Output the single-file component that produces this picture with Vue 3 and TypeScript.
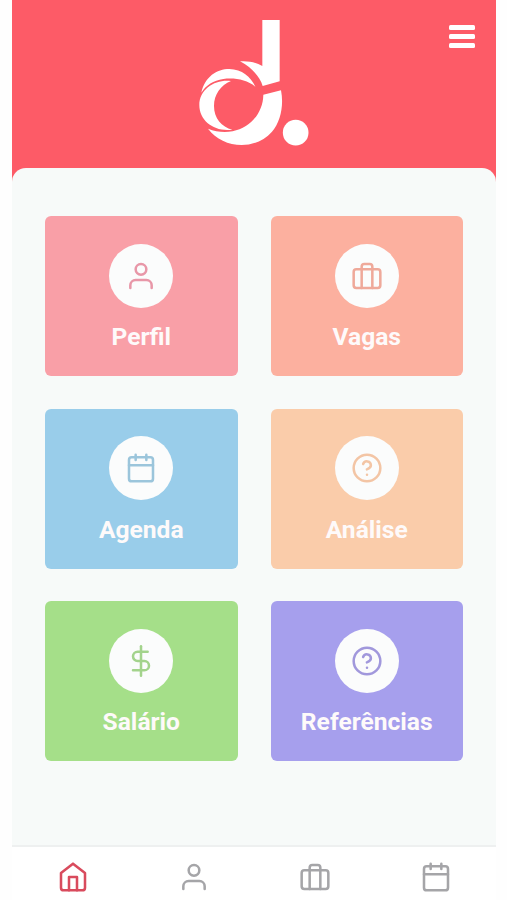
<script setup lang="ts">
type IconName = 'home' | 'user' | 'briefcase' | 'calendar' | 'help' | 'dollar'

interface Tile {
  label: string
  icon: IconName
  tone: string
}

const icons: Record<IconName, string[]> = {
  home: ['M3 9l9-7 9 7v11a2 2 0 0 1-2 2H5a2 2 0 0 1-2-2z', 'M9 22V12h6v10'],
  user: ['M20 21v-2a4 4 0 0 0-4-4H8a4 4 0 0 0-4 4v2', 'M16 7a4 4 0 1 1-8 0a4 4 0 0 1 8 0z'],
  briefcase: [
    'M4 7h16a2 2 0 0 1 2 2v10a2 2 0 0 1-2 2H4a2 2 0 0 1-2-2V9a2 2 0 0 1 2-2z',
    'M16 21V5a2 2 0 0 0-2-2h-4a2 2 0 0 0-2 2v16',
  ],
  calendar: [
    'M5 4h14a2 2 0 0 1 2 2v14a2 2 0 0 1-2 2H5a2 2 0 0 1-2-2V6a2 2 0 0 1 2-2z',
    'M16 2v4M8 2v4M3 10h18',
  ],
  help: [
    'M22 12a10 10 0 1 1-20 0a10 10 0 0 1 20 0z',
    'M9.09 9a3 3 0 0 1 5.83 1c0 2-3 3-3 3M12 17h.01',
  ],
  dollar: ['M12 1v22', 'M17 5H9.5a3.5 3.5 0 0 0 0 7h5a3.5 3.5 0 0 1 0 7H6'],
}

const tiles: Tile[] = [
  { label: 'Perfil', icon: 'user', tone: 'rose' },
  { label: 'Vagas', icon: 'briefcase', tone: 'coral' },
  { label: 'Agenda', icon: 'calendar', tone: 'sky' },
  { label: 'Análise', icon: 'help', tone: 'peach' },
  { label: 'Salário', icon: 'dollar', tone: 'green' },
  { label: 'Referências', icon: 'help', tone: 'violet' },
]

const tabs: IconName[] = ['home', 'user', 'briefcase', 'calendar']
const activeTab: IconName = 'home'
</script>

<template>
  <div class="screen">
    <header class="header">
      <svg class="logo" viewBox="0 0 450 465" fill="#fff">
        <path d="M247 45H299V229L248 243C240 216 216 188 180 169C205 167 228 172 247 183Z" />
        <path d="M64 263C75 215 110 192 148 192C186 193 212 215 226 245C200 224 165 218 130 222C100 227 78 240 64 263Z" />
        <path d="M153 228C108 222 58 250 58 301C58 348 104 382 157 374C125 366 102 340 102 303C102 269 122 240 153 228Z" />
        <path d="M84 371C108 381 133 383 158 379C210 368 249 325 250 269L303 256C312 300 302 350 276 380C251 409 215 420 185 420C145 420 108 402 84 371Z" />
        <circle cx="347" cy="383" r="38.5" />
      </svg>
      <button class="menu" type="button">
        <span class="bar"></span>
        <span class="bar"></span>
        <span class="bar"></span>
      </button>
    </header>

    <main class="content">
      <a v-for="tile in tiles" :key="tile.label" class="tile" :class="tile.tone">
        <span class="disc">
          <svg class="icon" viewBox="0 0 24 24">
            <path v-for="d in icons[tile.icon]" :key="d" :d="d" />
          </svg>
        </span>
        <span class="label">{{ tile.label }}</span>
      </a>
    </main>

    <nav class="tabs">
      <a v-for="tab in tabs" :key="tab" class="tab" :class="{ active: tab === activeTab }">
        <svg class="icon" viewBox="0 0 24 24">
          <path v-for="d in icons[tab]" :key="d" :d="d" />
        </svg>
      </a>
    </nav>
  </div>
</template>

<style>
body {
  background: #fefefe;
}
</style>

<style scoped>
.screen {
  display: flex;
  flex-direction: column;
  box-sizing: border-box;
  width: 484px;
  height: 900px;
  margin-left: 12px;
  overflow: hidden;
  background: #fd5b67;
  font-family: Roboto, sans-serif;
}

.header {
  display: grid;
  grid-template-columns: 1fr 150px 1fr;
  align-items: start;
  box-sizing: border-box;
  height: 168px;
  flex: none;
  padding-top: 5px;
}

.logo {
  grid-column: 2;
  width: 150px;
  height: 155px;
  margin-left: 1px;
}

.menu {
  display: flex;
  flex-direction: column;
  justify-self: end;
  gap: 4px;
  margin: 19.5px 21px 0 0;
  padding: 0;
  border: 0;
  background: none;
}

.bar {
  width: 26px;
  height: 5px;
  border-radius: 1.5px;
  background: #fff;
}

.content {
  display: grid;
  grid-template-columns: 192.5px 192.5px;
  grid-auto-rows: 160px;
  align-content: start;
  gap: 32.5px 33px;
  flex: 1;
  padding: 48.4px 33px 0;
  border-radius: 14px 14px 0 0;
  background: #f7faf9;
}

.tile {
  display: flex;
  flex-direction: column;
  align-items: center;
  box-sizing: border-box;
  padding-top: 27.3px;
  border-radius: 6px;
  background: currentColor;
}

.disc {
  display: flex;
  align-items: center;
  justify-content: center;
  width: 64px;
  height: 64px;
  border-radius: 50%;
  background: #fbfcfc;
}

.icon {
  width: 32px;
  height: 32px;
  fill: none;
  stroke: currentColor;
  stroke-width: 1.9;
  stroke-linecap: round;
  stroke-linejoin: round;
}

.label {
  margin-top: 14.5px;
  color: #fefafa;
  font-size: 24.6px;
  font-weight: 700;
  line-height: 30px;
}

.rose { color: #f99fa7; }
.coral { color: #fcb09f; }
.sky { color: #99cdea; }
.peach { color: #faccaa; }
.green { color: #a5df89; }
.violet { color: #a69fed; }

.rose .icon { color: #e897a8; }
.coral .icon { color: #efa99a; }
.sky .icon { color: #9bc5db; }
.peach .icon { color: #f3c5a5; }
.green .icon { color: #a3d38c; }
.violet .icon { color: #a198dc; }

.rose .label,
.coral .label,
.sky .label,
.peach .label,
.green .label,
.violet .label {
  color: #fefafa;
}

.tabs {
  display: grid;
  grid-template-columns: repeat(4, 1fr);
  box-sizing: border-box;
  height: 55px;
  flex: none;
  padding-top: 14px;
  border-top: 2px solid #eef0f0;
  background: #fff;
}

.tab {
  display: flex;
  justify-content: center;
  color: #a5a5a8;
}

.active {
  color: #d94b5d;
}
</style>
